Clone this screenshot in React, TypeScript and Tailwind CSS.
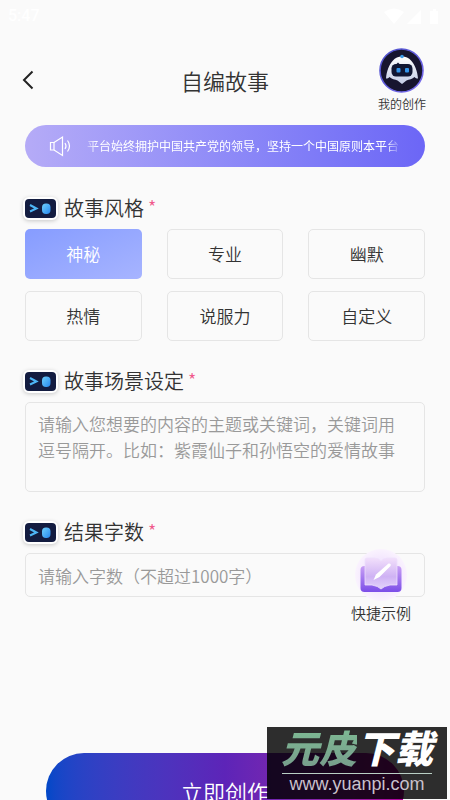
import { useState } from "react";

const styles = ["神秘", "专业", "幽默", "热情", "说服力", "自定义"];

function StatusBar() {
  return (
    <div className="flex h-8 items-center justify-between pl-2 pr-2 text-white">
      <span className="font-[Roboto,sans-serif] text-base font-medium">5:47</span>
      <svg width="58" height="18" viewBox="0 0 58 18" fill="currentColor">
        <path d="M0 5Q10 -2 20 5L10 17Z" />
        <path d="M37 3V17H23Z" />
        <path d="M49 2h3v2h2v13h-8V4h3z" />
      </svg>
    </div>
  );
}

function RobotAvatar() {
  return (
    <svg width="45" height="45" viewBox="0 0 45 45">
      <defs>
        <linearGradient id="robotShell" x1="0" y1="0" x2="0" y2="1">
          <stop offset="0" stopColor="#ffffff" />
          <stop offset="1" stopColor="#c3cce6" />
        </linearGradient>
        <linearGradient id="robotRing" x1="0" y1="0" x2="1" y2="1">
          <stop offset="0" stopColor="#4b4fc9" />
          <stop offset="1" stopColor="#7a6cf0" />
        </linearGradient>
      </defs>
      <circle cx="22.5" cy="22.5" r="21.5" fill="#17152f" stroke="url(#robotRing)" strokeWidth="1.6" />
      <path
        d="M23 8.5C26.500 8.500 30 10 32 12.500C35.500 16 38.500 23 39 30.500C37.500 30.500 36.500 30 35.500 29C33.500 31 30 31.500 27.500 32.500L23 36L18.500 32.500C16 31.500 12.500 31 10.500 29C9.500 30 8.500 30.500 7 30.500C7.500 23 10.500 16 14 12.500C16 10 19.500 8.500 23 8.500Z"
        fill="url(#robotShell)"
      />
      <circle cx="23" cy="8.5" r="1.8" fill="#3d9be8" />
      <rect x="12.5" y="16" width="21" height="12.5" rx="4.5" fill="#101633" />
      <path d="M17 16.5l2-2 2 2z" fill="#101633" />
      <rect x="17.5" y="20" width="4" height="4.5" rx="1" fill="#3494ea" />
      <rect x="26" y="20" width="4" height="4.5" rx="1" fill="#3494ea" />
    </svg>
  );
}

function FaceIcon() {
  return (
    <svg
      className="rounded-md border-2 border-white bg-[#131c40] shadow-[0_1px_4px_rgba(0,0,0,0.2)]"
      width="35"
      height="23"
      viewBox="0 0 31 19"
    >
      <defs>
        <linearGradient id="eye" x1="0" y1="0" x2="1" y2="1">
          <stop offset="0" stopColor="#6fd0fb" />
          <stop offset="1" stopColor="#2687ee" />
        </linearGradient>
      </defs>
      <path d="M5 6L11.5 9.500L5 12.500" fill="none" stroke="#4db5f5" strokeWidth="2" />
      <rect x="17" y="4.5" width="8.5" height="10.5" rx="4" fill="url(#eye)" />
    </svg>
  );
}

function BookIcon() {
  return (
    <svg width="52" height="52" viewBox="0 0 52 52">
      <defs>
        <linearGradient id="bookBack" x1="0" y1="0" x2="0" y2="1">
          <stop offset="0" stopColor="#c9a0f5" />
          <stop offset="1" stopColor="#7b4de8" />
        </linearGradient>
        <linearGradient id="bookPage" x1="0" y1="0" x2="0" y2="1">
          <stop offset="0" stopColor="#f2e0fb" />
          <stop offset="0.6" stopColor="#cfb2f4" />
          <stop offset="1" stopColor="#e3d3fb" />
        </linearGradient>
        <radialGradient id="bookGlow">
          <stop offset="0.6" stopColor="#f3e6fe" />
          <stop offset="1" stopColor="#faf3fe" />
        </radialGradient>
      </defs>
      <circle cx="26" cy="26" r="26" fill="url(#bookGlow)" />
      <rect x="5.500" y="17" width="41" height="26" rx="4" fill="url(#bookBack)" />
      <path
        d="M10 11Q10 9 12 9H19Q24 9 26 12Q28 9 33 9H40Q42 9 42 11V36H35Q29 37 26 40Q23 37 17 36H10Z"
        fill="url(#bookPage)"
        stroke="#eedffc"
        strokeWidth="0.8"
      />
      <path d="M18.500 31L21 25.500L33.500 14.500Q36.500 14 35.500 17L24.500 28Z" fill="#fff" />
    </svg>
  );
}

function Heading({ text, htmlFor }: { text: string; htmlFor?: string }) {
  return (
    <div className="-ml-0.5 mb-[5px] flex h-8 items-center gap-[6px]">
      <FaceIcon />
      <label htmlFor={htmlFor} className="text-xl text-[#333]">
        {text}
        <span className="ml-1 align-[2px] text-lg leading-none text-[#f0598c]">*</span>
      </label>
    </div>
  );
}

function Watermark() {
  return (
    <div className="absolute right-[3px] bottom-px flex h-18 w-[180px] flex-col items-center bg-black/82">
      <div className="text-[38px] leading-10 font-black italic">
        <span className="bg-linear-to-b from-[#7fc296] to-[#76988a] bg-clip-text text-transparent">元皮</span>
        <span className="text-white">下载</span>
      </div>
      <div className="mt-[6px] h-px w-[150px] bg-[#b9cfc4]" />
      <div className="font-['Liberation_Sans',Arial,sans-serif] text-lg leading-5 font-normal text-[#c9c1cc]">
        www.yuanpi.com
      </div>
    </div>
  );
}

function App() {
  const [selected, setSelected] = useState("神秘");
  const [scene, setScene] = useState("");
  const [count, setCount] = useState("");

  return (
    <div className="relative h-screen overflow-hidden bg-[#fafafa] font-['Noto_Sans_CJK_SC',sans-serif] font-[350]">
      <StatusBar />

      {/* Header */}
      <header className="grid h-[93px] grid-cols-[1fr_auto_1fr] items-start px-6">
        <button type="button" aria-label="返回" className="mt-[38px] -ml-0.5 w-fit">
          <svg width="12" height="20" viewBox="0 0 12 20" fill="none" stroke="#222" strokeWidth="2">
            <path d="M10.500 1.500L2 10L10.500 18.500" />
          </svg>
        </button>
        <h1 className="mt-8 text-[22px] leading-8 font-[350] text-[#333]">自编故事</h1>
        <a href="#works" className="mt-4 flex flex-col items-center justify-self-end text-xs text-[#333]">
          <RobotAvatar />
          <span className="mt-[3px]">我的创作</span>
        </a>
      </header>

      <main className="px-[25px]">
        {/* Notice */}
        <div className="flex h-[42px] items-center rounded-full bg-linear-to-r from-[#b5abf7] to-[#6c66f6] pr-6 pl-6">
          <svg className="shrink-0" width="22" height="22" viewBox="0 0 22 22" fill="none" stroke="#fff" strokeWidth="1.2">
            <path d="M1.500 7.500H5V15H1.500Z" />
            <path d="M5 7.500L13.500 2V20.500L5 15" />
            <path d="M16 8Q18 11 16 14" />
            <path d="M18.500 5.500Q22.500 11 18.500 16.500" />
          </svg>
          <p className="ml-3 flex-1 overflow-hidden mask-[linear-gradient(to_right,transparent,black_14px,black_calc(100%-14px),transparent)] pl-1 text-xs font-normal whitespace-nowrap text-white">
            平台始终拥护中国共产党的领导，坚持一个中国原则本平台
          </p>
        </div>

        {/* Style */}
        <section className="mt-[25px]">
          <Heading text="故事风格" />
          <div className="grid grid-cols-3 gap-x-[25px] gap-y-3">
            {styles.map((item) => (
              <button
                key={item}
                type="button"
                onClick={() => setSelected(item)}
                className={
                  item === selected
                    ? "h-[50px] rounded-[5px] bg-linear-to-br from-[#869cff] to-[#a7b4ff] text-[17px] text-white"
                    : "h-[50px] rounded-[5px] border border-[#e5e5e5] text-[17px] text-[#333]"
                }
              >
                {item}
              </button>
            ))}
          </div>
        </section>

        {/* Scene */}
        <section className="mt-6">
          <Heading text="故事场景设定" htmlFor="scene" />
          <textarea
            id="scene"
            value={scene}
            onChange={(e) => setScene(e.target.value)}
            placeholder="请输入您想要的内容的主题或关键词，关键词用逗号隔开。比如：紫霞仙子和孙悟空的爱情故事"
            className="block h-[90px] w-full resize-none rounded-[5px] border border-[#e5e5e5] py-2 pr-5 pl-3 text-[17px] leading-[26px] text-[#333] placeholder:text-[#999]"
          />
        </section>

        {/* Word count */}
        <section className="mt-6">
          <Heading text="结果字数" htmlFor="count" />
          <input
            id="count"
            type="text"
            value={count}
            onChange={(e) => setCount(e.target.value)}
            placeholder="请输入字数（不超过1000字）"
            className="block h-11 w-full rounded-[5px] border border-[#e5e5e5] px-3 text-[17px] text-[#333] placeholder:text-[#999]"
          />
        </section>
      </main>

      <div className="mt-[156px] px-[46px]">
        <button
          type="button"
          className="h-[76px] w-full rounded-full bg-linear-to-r from-[#0048c8] via-[#5d24b8] to-[#b0009c] text-[22px] text-white"
        >
          立即创作
        </button>
      </div>

      {/* Floating example button */}
      <button
        type="button"
        className="absolute top-[549px] right-[39px] flex flex-col items-center text-[15px] leading-6 text-[#333]"
      >
        <BookIcon />
        <span>快捷示例</span>
      </button>

      <Watermark />
    </div>
  );
}

export default App;
